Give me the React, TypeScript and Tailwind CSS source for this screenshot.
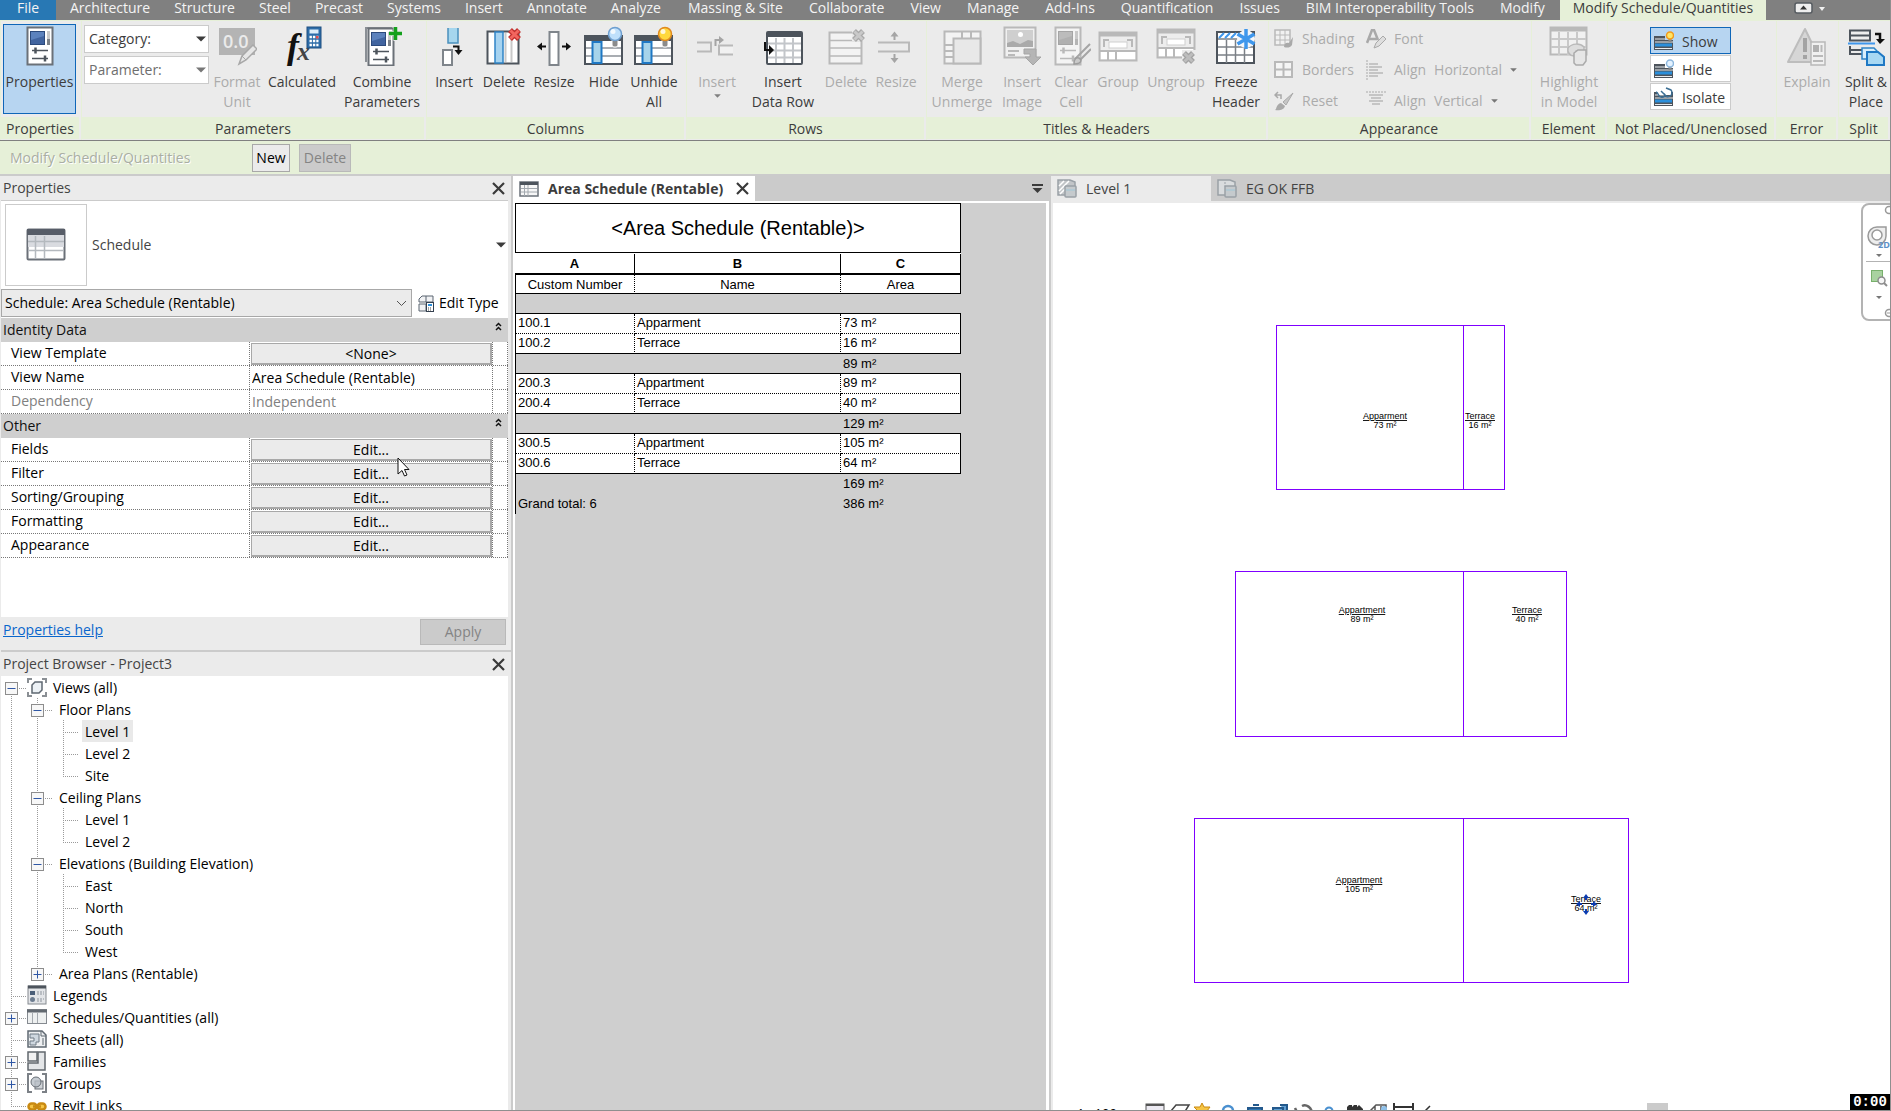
import { Fragment, ReactNode } from 'react';

const G = '#b9b9b9'; // disabled icon stroke
const D = '#4d545c'; // enabled icon stroke

/* ---------- icons ---------- */

function Icon({ children, size = 40, className = '' }: { children: ReactNode; size?: number; className?: string }) {
  return (
    <svg width={size} height={size} viewBox={`0 0 ${size} ${size}`} fill="none" className={`shrink-0 ${className}`} aria-hidden="true">
      {children}
    </svg>
  );
}

function Caret({ className = '' }: { className?: string }) {
  return (
    <svg width="10" height="6" viewBox="0 0 10 6" className={className} aria-hidden="true">
      <path d="M0 0.5h10L5 5.5z" fill="currentColor" />
    </svg>
  );
}

function CrossShape({ x, y, color, edge }: { x: number; y: number; color: string; edge: string }) {
  return (
    <g transform={`translate(${x} ${y})`}>
      <path d="M2 2l9 9M11 2l-9 9" stroke={edge} strokeWidth="5.5" />
      <path d="M2.5 2.5l8 8M10.5 2.5l-8 8" stroke={color} strokeWidth="3" />
    </g>
  );
}

function Sheet({ gray = false }: { gray?: boolean }) {
  const line = gray ? G : D;
  return (
    <g>
      <rect x="7.5" y="1.5" width="25" height="37" fill={gray ? '#f4f4f4' : '#fff'} stroke={gray ? G : '#6b7178'} strokeWidth="2" />
      <rect x="10.5" y="5.5" width="14" height="13" fill={gray ? '#b0b0b0' : '#41649f'} stroke={gray ? '#a5a5a5' : '#2c4a7c'} />
      <path d="M11 6h13v4l-13 4z" fill={gray ? '#bcbcbc' : '#5c82bd'} />
      <rect x="27" y="5" width="3" height="8" fill="#c9c9c9" />
      <rect x="27" y="13" width="3" height="6" fill={gray ? '#b5b5b5' : '#7d8288'} />
      <path d="M12 24.5h16M12 32.5h16" stroke={line} strokeWidth="1.5" />
      <path d="M15.5 21.5v6M25 29.5v6" stroke={line} strokeWidth="2.5" />
    </g>
  );
}

function PropertiesIcon() {
  return <Icon><Sheet /></Icon>;
}

function FormatUnitIcon() {
  return (
    <Icon>
      <rect x="2" y="2" width="36" height="27" fill="#b4b4b4" />
      <text x="6" y="22" fontSize="18" fontWeight="600" fill="#ebebeb" fontFamily="Open Sans, sans-serif">0.0</text>
      <path d="M22 38l3-8 11-11 4 4-11 11z" fill="#e6e6e6" stroke="#a8a8a8" strokeWidth="1.5" />
      <path d="M25 30l4 4" stroke="#a8a8a8" />
    </Icon>
  );
}

function CalculatedIcon() {
  return (
    <Icon>
      <text x="5" y="32" fontSize="36" fontStyle="italic" fontWeight="700" fill="#111" fontFamily="Liberation Serif, serif">f</text>
      <text x="15" y="34" fontSize="26" fontStyle="italic" fontWeight="700" fill="#444" fontFamily="Liberation Serif, serif">x</text>
      <rect x="25" y="1" width="14" height="21" fill="#2d6ca8" stroke="#1f4f80" />
      <rect x="27.5" y="3.5" width="9" height="4" fill="#dcecf8" />
      <path d="M27.5 11h9M27.5 15h9M27.5 19h9" stroke="#fff" strokeWidth="2.5" strokeDasharray="2.4 1" />
      <rect x="34" y="10" width="2.5" height="2.5" fill="#e34b4b" />
    </Icon>
  );
}

function CombineIcon() {
  return (
    <Icon>
      <path d="M4 36V2h26" stroke="#8a8f95" strokeWidth="2" />
      <g transform="translate(-1 1)"><Sheet /></g>
      <path d="M34 0v15M27 7.5h14" stroke="#ebebeb" strokeWidth="5" />
      <path d="M33.500 1v13M27 7.500h13" stroke="#13a01c" strokeWidth="3.5" />
    </Icon>
  );
}

function ColumnInsertIcon() {
  return (
    <Icon>
      <path d="M14 2v15h10V2" fill="#a6d6ee" stroke="#4a90bd" strokeWidth="1.5" />
      <rect x="9" y="24" width="9" height="15" fill="#fff" stroke="#7f858b" strokeWidth="2" />
      <path d="M19 20.5h5.500v5" stroke="#111" strokeWidth="2" />
      <path d="M20.5 24h8l-4 5z" fill="#111" />
    </Icon>
  );
}

function ColumnDeleteIcon() {
  return (
    <Icon>
      <rect x="3.5" y="5.5" width="31" height="32" fill="#fff" stroke={D} strokeWidth="2" />
      <path d="M21.500 7v29M27.500 7v29" stroke="#c9c9c9" strokeWidth="2" />
      <rect x="11" y="6" width="8" height="31" fill="#a6d3f0" stroke="#2f84c6" strokeWidth="1.5" />
      <CrossShape x={24} y={2} color="#f2665f" edge="#c22f2c" />
    </Icon>
  );
}

function ColumnResizeIcon() {
  return (
    <Icon>
      <rect x="15.5" y="6" width="9" height="33" fill="#fff" stroke="#7f858b" strokeWidth="2" />
      <path d="M5 20.5h7M28 20.5h7" stroke="#111" strokeWidth="2" />
      <path d="M3 20.5l5-4v8zM37 20.5l-5-4v8z" fill="#111" />
    </Icon>
  );
}

function BulbIcon({ lit = false }: { lit?: boolean }) {
  return (
    <Icon>
      <rect x="1" y="10" width="37" height="28" fill="#fff" stroke={D} strokeWidth="2" />
      <rect x="1" y="10" width="37" height="5" fill={D} />
      <path d="M2 22h35M2 30h35" stroke="#a9adb2" strokeWidth="2" />
      <rect x="8.5" y="16" width="9" height="21" fill="#a6d3ea" stroke="#1f78c4" strokeWidth="2" />
      <rect x="28" y="13" width="6" height="8" rx="2" fill="#8b8b8b" stroke="#fff" />
      <circle cx="31" cy="8" r="6.5" fill={lit ? '#ffd83d' : '#bfe0fb'} stroke={lit ? '#e08a1d' : '#6e9fd0'} strokeWidth="1.5" />
      <circle cx="29" cy="5.5" r="2.5" fill="#fff" opacity="0.8" />
    </Icon>
  );
}

function RowInsertIcon() {
  return (
    <Icon>
      <path d="M0 16.5h14v9H0" stroke={G} strokeWidth="2" />
      <path d="M36 19.5H22v9h14" fill="#f1f1f1" stroke={G} strokeWidth="2" />
      <path d="M18.5 20v-6h5" stroke="#a5a5a5" strokeWidth="2" />
      <path d="M22 10l5 4-5 4z" fill="#a5a5a5" />
    </Icon>
  );
}

function DataRowIcon() {
  return (
    <Icon>
      <rect x="4" y="6" width="35" height="32" rx="1" fill="#fff" stroke={D} strokeWidth="2" />
      <rect x="4" y="6" width="35" height="5" fill={D} />
      <path d="M5 17.5h33M5 24.5h33M5 31.5h33M13 12v25M21.5 12v25M30 12v25" stroke="#c3c6ca" strokeWidth="2" />
      <path d="M2 16v8h5" stroke="#111" strokeWidth="2" />
      <path d="M6 19l5 5-5 5z" fill="#111" />
    </Icon>
  );
}

function RowDeleteIcon() {
  return (
    <Icon>
      <rect x="3.5" y="6.5" width="32" height="31" fill="#f3f3f3" stroke={G} strokeWidth="2" />
      <path d="M4 14.5h31M4 22h31M4 30h31" stroke={G} strokeWidth="1.5" />
      <path d="M26 4h12v11H26z" fill="#ebebeb" />
      <CrossShape x={26} y={3} color="#c9c9c9" edge="#a9a9a9" />
    </Icon>
  );
}

function RowResizeIcon() {
  return (
    <Icon>
      <path d="M2 16.5h31v9H2" stroke={G} strokeWidth="2" />
      <path d="M18.5 8v6M18.5 28v6" stroke="#a5a5a5" strokeWidth="2" />
      <path d="M18.5 5.5l4 5h-8zM18.5 37l4-5h-8z" fill="#a5a5a5" />
    </Icon>
  );
}

function MergeIcon() {
  return (
    <Icon>
      <rect x="2.5" y="5.5" width="36" height="32" fill="#f3f3f3" stroke={G} strokeWidth="2" />
      <rect x="11.5" y="12.5" width="27" height="25" fill="#e8e8e8" stroke={G} strokeWidth="2" />
      <path d="M3 19h8M3 25h8M3 31h8M20 6v6M29 6v6" stroke={G} strokeWidth="2" />
    </Icon>
  );
}

function InsertImageIcon() {
  return (
    <Icon>
      <rect x="2.5" y="1.5" width="31" height="30" fill="#f0f0f0" stroke={G} strokeWidth="2" />
      <rect x="5" y="4" width="26" height="17" fill="#cfcfcf" />
      <circle cx="18.5" cy="8.5" r="2.5" fill="#fff" />
      <path d="M5 17l6-2 7 3 8-4 5 1v6H5z" fill="#aaa" />
      <path d="M6 25h11M6 29h7" stroke={G} strokeWidth="2" />
      <path d="M22 23h12v8h5l-8 8-8-8h5v-3h-6z" fill="#b5b5b5" stroke="#a5a5a5" />
    </Icon>
  );
}

function ClearCellIcon() {
  return (
    <Icon>
      <g transform="translate(-3 0)"><Sheet gray /></g>
      <path d="M24 33l15-15M27 36l13-13" stroke="#a5a5a5" strokeWidth="2" />
      <path d="M23 38c0-5 2-7 5-6l2 2c0 3-3 4-7 4z" fill="#c9c9c9" stroke="#9d9d9d" strokeWidth="1.5" />
    </Icon>
  );
}

function GroupIcon({ ungroup = false }: { ungroup?: boolean }) {
  return (
    <Icon>
      <g transform={ungroup ? 'translate(0 -3)' : undefined}>
        <rect x="1.5" y="6.5" width="37" height="28" fill="#ededed" stroke={G} strokeWidth="2" />
        <rect x="1.5" y="6.5" width="37" height="4" fill={G} />
        <path d="M6 21v-7h5M34 21v-7h-5" stroke={G} strokeWidth="2" />
        <rect x="11" y="16" width="18" height="6" fill="#fff" stroke="#cfcfcf" />
        <rect x="3" y="25" width="34" height="8" fill="#fff" />
        <path d="M2 25h36M10 25v9M18 25v9" stroke={G} strokeWidth="2" />
      </g>
      {ungroup && <path d="M26 24h14v14H26z" fill="#ebebeb" />}
      {ungroup && <CrossShape x={26} y={25} color="#bdbdbd" edge="#a2a2a2" />}
    </Icon>
  );
}

function FreezeIcon() {
  return (
    <Icon>
      <rect x="1" y="6" width="37" height="31" fill="#fff" stroke={D} strokeWidth="2" />
      <path d="M2 13h35M2 21h35M2 29h35M10.5 14v23M19.5 14v23M28.5 14v23" stroke="#7b8086" strokeWidth="1.5" />
      <path d="M3 12l5-5M9 12l5-5M15 12l5-5" stroke="#3f97ec" strokeWidth="2" />
      <circle cx="30" cy="13" r="9" fill="#f3f6fa" />
      <path d="M30 3v20M21.5 8l17 10M38.5 8l-17 10" stroke="#3f97ec" strokeWidth="3.5" />
    </Icon>
  );
}

function HighlightIcon() {
  return (
    <Icon>
      <rect x="1.5" y="1.5" width="36" height="27" fill="#f1f1f1" stroke={G} strokeWidth="2" />
      <rect x="1.5" y="1.5" width="36" height="4" fill={G} />
      <path d="M2 13h35M2 21h35M10 6v23M19 6v23M28 6v23" stroke="#c9c9c9" strokeWidth="2" />
      <path d="M19 22c4-5 12-5 16-1v4h-8l-2 5c-4 0-7-4-6-8z" fill="#ddd" stroke={G} strokeWidth="1.5" />
      <path d="M25 27l4-3h8v11l-3 4h-7l-2-2z" fill="#e6e6e6" stroke="#aaa" strokeWidth="1.5" />
    </Icon>
  );
}

function ExplainIcon() {
  return (
    <Icon>
      <path d="M18 3l16 33H1z" fill="#d6d6d6" stroke="#bdbdbd" strokeWidth="2" strokeLinejoin="round" />
      <path d="M18 12v14M18 29v4" stroke="#a3a3a3" strokeWidth="4" />
      <rect x="24" y="16" width="14" height="23" fill="#f0f0f0" stroke={G} strokeWidth="1.5" />
      <rect x="26" y="19" width="6" height="7" fill="#b0b0b0" />
      <path d="M34.5 19v7M26 30h10M26 35h10" stroke={G} strokeWidth="2" />
    </Icon>
  );
}

function SplitIcon() {
  return (
    <Icon>
      <path d="M4 4.5h20v10H4zM4 9.5h20" fill="#eee" stroke={D} strokeWidth="2" />
      <path d="M4 20v8h12M4 24h12" stroke={D} strokeWidth="2" />
      <path d="M2 17.5h27" stroke="#3f97ec" strokeWidth="2" />
      <path d="M29 8h5v6" stroke="#111" strokeWidth="2.5" />
      <path d="M30 13h9l-5 5z" fill="#111" />
      <path d="M16 22h12l3 3v8H16z" fill="#d8eefb" stroke="#2f84c6" strokeWidth="1.5" />
      <path d="M21 26h11l6 5v8H21z" fill="#a8d8f3" stroke="#1f78c4" strokeWidth="2" />
    </Icon>
  );
}

function ShadingIcon() {
  return (
    <Icon size={20}>
      <rect x="1" y="1" width="15" height="15" fill="#f1f1f1" stroke={G} strokeWidth="1.5" />
      <path d="M1 6h15M1 11h15M6 1v15M11 1v15" stroke={G} />
      <path d="M10 18c0-4 3-5 5-4l4-6-1 8c-2 3-5 3-8 2z" fill="#a9a9a9" />
    </Icon>
  );
}

function BordersIcon() {
  return (
    <Icon size={20}>
      <rect x="1" y="2" width="17" height="15" fill="#f5f5f5" stroke={G} strokeWidth="2" />
      <path d="M1 9.5h17M9.5 2v15" stroke={G} strokeWidth="2" />
    </Icon>
  );
}

function ResetIcon() {
  return (
    <Icon size={20}>
      <path d="M1 4h6v4M4 1L1 4l3 3" stroke="#a9a9a9" strokeWidth="1.5" />
      <path d="M19 2L9 11l3 3z" fill="#c6c6c6" stroke="#a9a9a9" />
      <path d="M1 19c2-1 1-6 6-7l4 3c-1 4-6 5-10 4z" fill="#a9a9a9" />
    </Icon>
  );
}

function FontIcon() {
  return (
    <Icon size={20}>
      <path d="M1 14L6 1h2l4 10M3 10h8" stroke="#a9a9a9" strokeWidth="2.5" />
      <path d="M8 19l2-5 7-7 3 3-7 7z" fill="#dedede" stroke="#a9a9a9" />
    </Icon>
  );
}

function AlignHIcon() {
  return (
    <Icon size={20}>
      <path d="M1 0v20" stroke="#a9a9a9" strokeDasharray="2 1" />
      <path d="M3 4h9M3 7h13M3 10h9M3 13h14M3 16h9" stroke={G} strokeWidth="1.5" />
    </Icon>
  );
}

function AlignVIcon() {
  return (
    <Icon size={20}>
      <path d="M0 1h20" stroke="#a9a9a9" strokeDasharray="2 1" />
      <path d="M3 4h14M5 7h10M3 10h14M6 13h8" stroke={G} strokeWidth="1.5" />
    </Icon>
  );
}

function PlacedIcon({ kind }: { kind: 'show' | 'hide' | 'isolate' }) {
  return (
    <Icon size={20}>
      <path d="M0 5h19v14H0z" fill={D} />
      <path d="M1 8h10M1 11h18M1 17.5h17" stroke="#e8ebee" />
      <rect x="1" y="12.5" width="17" height="3" fill="#2b8fdb" />
      {kind === 'isolate' ? (
        <g>
          <path d="M3 0h14v8H3z" fill="#fff" />
          <path d="M2 5c3 1 2 5 5 5 3 1 4-2 4-2s2 3 5 1c3-1 2-5 1-6l-5-2M7 4l4 4" stroke="#3c6f94" strokeWidth="1.5" />
        </g>
      ) : (
        <g>
          <path d="M11 0h9v9h-9z" fill={kind === 'show' ? '#b7d5f1' : '#fff'} />
          <rect x="14.5" y="7" width="3" height="4" fill="#888" />
          <circle cx="16" cy="4.5" r="3.5" fill={kind === 'show' ? '#ffe566' : '#e4f2ff'} stroke={kind === 'show' ? '#f39a1b' : '#8db7dd'} strokeWidth="1.5" />
        </g>
      )}
    </Icon>
  );
}

function ScheduleIcon({ className = '' }: { className?: string }) {
  return (
    <svg width="20" height="16" viewBox="0 0 20 16" fill="none" className={`shrink-0 ${className}`} aria-hidden="true">
      <rect x="1" y="1" width="18" height="14" fill="#f7f7f7" stroke="#6b727a" strokeWidth="1.5" />
      <rect x="1" y="1" width="18" height="3" fill={D} />
      <path d="M2 7.5h16M2 11h16M5.5 4v11M9 4v11" stroke="#a3a9af" />
    </svg>
  );
}

function ViewTabIcon({ hatched = false }: { hatched?: boolean }) {
  return (
    <Icon size={20}>
      <path d="M1 1h12l5 2v13H1z" fill={hatched ? '#c2c5c8' : '#d9dcde'} stroke="#9aa1a7" strokeWidth="1.5" />
      {hatched && <path d="M2 7l5-5M2 12L12 2M3 15l5-5" stroke="#fff" strokeWidth="1.5" />}
      {!hatched && <path d="M8 3v5" stroke="#9aa1a7" strokeDasharray="2 1" />}
      <rect x="8" y="7" width="11" height="11" rx="1" fill="#c5cacd" stroke="#9aa1a7" strokeWidth="1.5" />
      <path d="M9 11h9" stroke="#9fc7d8" />
    </Icon>
  );
}

function CloseIcon() {
  return (
    <svg width="13" height="13" viewBox="0 0 13 13" aria-hidden="true">
      <path d="M1 1l11 11M12 1L1 12" stroke="#3a3a3a" strokeWidth="2.2" fill="none" />
    </svg>
  );
}

/* ---------- ribbon ---------- */

const menuTabs = ['Architecture', 'Structure', 'Steel', 'Precast', 'Systems', 'Insert', 'Annotate', 'Analyze'];

const extraTabs = [
  'Massing & Site', 'Collaborate', 'View', 'Manage', 'Add-Ins', 'Quantification', 'Issues', 'BIM Interoperability Tools', 'Modify',
];

function MenuBar() {
  return (
    <nav className="flex h-5 shrink-0 overflow-hidden whitespace-nowrap bg-[#808080] text-[#f4f4f4]">
      <button className="h-5 w-14 shrink-0 bg-[#2878b4] pb-1 leading-4">File</button>
      <div className="flex pl-0.5">
        {menuTabs.map((tab) => (
          <button key={tab} className="h-5 px-3 pb-1 leading-4">{tab}</button>
        ))}
      </div>
      <div className="flex px-0.5">
        {extraTabs.map((tab) => (
          <button key={tab} className="h-5 px-[13px] pb-1 leading-4">{tab}</button>
        ))}
      </div>
      <button className="h-5 w-[206px] shrink-0 bg-[#e6f0d8] pb-1 leading-4 text-[#3c3c3c]">Modify Schedule/Quantities</button>
      <button className="ml-7 flex items-start pt-0.5" aria-label="Minimize ribbon">
        <svg width="32" height="12" viewBox="0 0 32 12">
          <rect x="1" y="1" width="17" height="10" rx="2" fill="#eee" stroke="#565b60" strokeWidth="1.5" />
          <path d="M9.5 3.5l3.500 4H6z" fill="#333" />
          <path d="M25 5h6l-3 4z" fill="#f0f0f0" />
        </svg>
      </button>
    </nav>
  );
}

interface ToolProps {
  icon: ReactNode;
  label: string;
  width: string;
  off?: boolean;
  menu?: boolean;
}

function Tool({ icon, label, width, off = false, menu = false }: ToolProps) {
  return (
    <button disabled={off} className={`flex shrink-0 flex-col items-center whitespace-nowrap pt-[5px] ${width} ${off ? 'text-[#ababab]' : 'text-[#3c3c3c]'}`}>
      {icon}
      <span className="mt-1.5 block whitespace-pre-line leading-5">{label}</span>
      {menu && <Caret className="mt-0.5 h-1 w-[7px] text-[#808080]" />}
    </button>
  );
}

function Panel({ title, width, children }: { title: string; width: string; children: ReactNode }) {
  return (
    <section className={`flex flex-col border-l border-[#e6f0d8] ${width}`}>
      <div className="flex h-[96px] overflow-hidden pl-0.5">{children}</div>
      <h2 className="mr-[2px] h-[22px] whitespace-nowrap bg-[#e6f0d8] text-center leading-6 text-[#3c3c3c]">{title}</h2>
    </section>
  );
}

function RibbonSelect({ label, off = false }: { label: string; off?: boolean }) {
  return (
    <div className="relative h-7">
      <select aria-label={label} disabled={off} className={`h-full w-full appearance-none border border-[#cbcbcb] bg-white pl-1 opacity-100 ${off ? 'text-[#6e6e6e]' : 'text-[#3c3c3c]'}`}>
        <option>{label}</option>
      </select>
      <Caret className={`pointer-events-none absolute right-[3px] top-[11px] ${off ? 'text-[#777]' : 'text-[#3c3c3c]'}`} />
    </div>
  );
}

function SmallTool({ icon, children }: { icon: ReactNode; children: ReactNode }) {
  return (
    <button disabled className="flex h-[31px] items-center gap-2 whitespace-nowrap text-[#ababab]">
      {icon}
      {children}
    </button>
  );
}

function PlacedButton({ kind, label, active = false }: { kind: 'show' | 'hide' | 'isolate'; label: string; active?: boolean }) {
  return (
    <button className={`flex h-[27px] items-center gap-2 border pl-[3px] ${active ? 'border-[#0f66b8] bg-[#b7d5f1]' : 'border-[#cbcbcb] bg-white'}`}>
      <PlacedIcon kind={kind} />
      <span className="pt-0.5">{label}</span>
    </button>
  );
}

function Ribbon() {
  return (
    <div className="flex h-[121px] shrink-0 overflow-hidden border-b border-t border-b-[#808080] border-t-[#e6f0d8] bg-[#ebebeb]">
      <Panel title="Properties" width="w-[81px] shrink-0">
        <button className="mt-[3px] flex h-[90px] w-[73px] flex-col items-center border border-[#0f66b8] bg-[#b7d5f1] pt-px text-[#3c3c3c]">
          <PropertiesIcon />
          <span className="mt-1.5 leading-5">Properties</span>
        </button>
      </Panel>
      <Panel title="Parameters" width="w-[345px] shrink-0">
        <div className="mr-[3px] flex w-[125px] shrink-0 flex-col gap-[3px] pt-1">
          <RibbonSelect label="Category:" />
          <RibbonSelect label="Parameter:" off />
        </div>
        <Tool icon={<FormatUnitIcon />} label={'Format\nUnit'} width="w-[50px]" off />
        <Tool icon={<CalculatedIcon />} label="Calculated" width="w-[80px]" />
        <Tool icon={<CombineIcon />} label={'Combine\nParameters'} width="w-[80px]" />
      </Panel>
      <Panel title="Columns" width="w-[260px] shrink-0">
        <Tool icon={<ColumnInsertIcon />} label="Insert" width="w-[50px]" />
        <Tool icon={<ColumnDeleteIcon />} label="Delete" width="w-[50px]" />
        <Tool icon={<ColumnResizeIcon />} label="Resize" width="w-[50px]" />
        <Tool icon={<BulbIcon />} label="Hide" width="w-[50px]" />
        <Tool icon={<BulbIcon lit />} label={'Unhide\nAll'} width="w-[50px]" />
      </Panel>
      <Panel title="Rows" width="w-[240px] shrink-0">
        <Tool icon={<RowInsertIcon />} label="Insert" width="w-[56px]" off menu />
        <Tool icon={<DataRowIcon />} label={'Insert\nData Row'} width="w-[76px]" />
        <Tool icon={<RowDeleteIcon />} label="Delete" width="w-[50px]" off />
        <Tool icon={<RowResizeIcon />} label="Resize" width="w-[50px]" off />
      </Panel>
      <Panel title="Titles & Headers" width="w-[342px] shrink-0">
        <Tool icon={<MergeIcon />} label={'Merge\nUnmerge'} width="w-[66px]" off />
        <Tool icon={<InsertImageIcon />} label={'Insert\nImage'} width="w-[54px]" off />
        <Tool icon={<ClearCellIcon />} label={'Clear\nCell'} width="w-[44px]" off />
        <Tool icon={<GroupIcon />} label="Group" width="w-[50px]" off />
        <Tool icon={<GroupIcon ungroup />} label="Ungroup" width="w-[66px]" off />
        <Tool icon={<FreezeIcon />} label={'Freeze\nHeader'} width="w-[54px]" />
      </Panel>
      <Panel title="Appearance" width="w-[263px] shrink-0">
        <div className="flex w-[95px] shrink-0 flex-col pl-[3px] pt-0.5">
          <SmallTool icon={<ShadingIcon />}>Shading</SmallTool>
          <SmallTool icon={<BordersIcon />}>Borders</SmallTool>
          <SmallTool icon={<ResetIcon />}>Reset</SmallTool>
        </div>
        <div className="flex flex-col pt-0.5">
          <SmallTool icon={<FontIcon />}>Font</SmallTool>
          <SmallTool icon={<AlignHIcon />}>
            <span>Align</span><span>Horizontal</span><Caret className="h-1 w-[7px] text-[#777]" />
          </SmallTool>
          <SmallTool icon={<AlignVIcon />}>
            <span>Align</span><span>Vertical</span><Caret className="h-1 w-[7px] text-[#777]" />
          </SmallTool>
        </div>
      </Panel>
      <Panel title="Element" width="w-[76px] shrink-0">
        <Tool icon={<HighlightIcon />} label={'Highlight\nin Model'} width="w-[70px]" off />
      </Panel>
      <Panel title="Not Placed/Unenclosed" width="w-[169px] shrink-0">
        <div className="ml-10 flex w-[81px] flex-col gap-px pt-1.5 text-[#3c3c3c]">
          <PlacedButton kind="show" label="Show" active />
          <PlacedButton kind="hide" label="Hide" />
          <PlacedButton kind="isolate" label="Isolate" />
        </div>
      </Panel>
      <Panel title="Error" width="w-[62px] shrink-0">
        <Tool icon={<ExplainIcon />} label="Explain" width="w-[56px]" off />
      </Panel>
      <Panel title="Split" width="min-w-[52px] flex-1">
        <Tool icon={<SplitIcon />} label={'Split &\nPlace'} width="w-[50px]" />
      </Panel>
    </div>
  );
}

function OptionsBar() {
  return (
    <div className="flex h-[35px] shrink-0 items-center border-b-2 border-[#cbcbcb] bg-[#e6f0d8]">
      <span className="w-[252px] whitespace-nowrap pl-[10px] text-[#a9aea3] [text-shadow:1px_1px_0_#fff]">Modify Schedule/Quantities</span>
      <button className="h-7 w-[38px] border border-[#a8a8a8] bg-[#ebebeb] text-black">New</button>
      <button disabled className="ml-[9px] h-7 w-[52px] border border-[#b9b9b9] bg-[#cbcbcb] text-[#848484]">Delete</button>
    </div>
  );
}

/* ---------- properties palette ---------- */

interface Param {
  name: string;
  value: string;
  kind: 'button' | 'text' | 'readonly';
}

const groups: { title: string; params: Param[] }[] = [
  {
    title: 'Identity Data',
    params: [
      { name: 'View Template', value: '<None>', kind: 'button' },
      { name: 'View Name', value: 'Area Schedule (Rentable)', kind: 'text' },
      { name: 'Dependency', value: 'Independent', kind: 'readonly' },
    ],
  },
  {
    title: 'Other',
    params: ['Fields', 'Filter', 'Sorting/Grouping', 'Formatting', 'Appearance'].map((name) => ({ name, value: 'Edit...', kind: 'button' as const })),
  },
];

function PaletteTitle({ children }: { children: ReactNode }) {
  return (
    <header className="flex h-6 shrink-0 items-center justify-between pl-[2px] pr-1.5 text-[#444]">
      <h2 className="leading-6">{children}</h2>
      <button aria-label="Close"><CloseIcon /></button>
    </header>
  );
}

function ParamRow({ name, value, kind }: Param) {
  const id = `param-${name}`;
  return (
    <div className="flex h-6 border-b border-dotted border-[#777]">
      <label htmlFor={id} className={`w-[249px] shrink-0 border-r border-dotted border-[#777] pl-[10px] leading-[22px] ${kind === 'readonly' ? 'text-[#808080]' : 'text-black'}`}>{name}</label>
      <div className="flex min-w-0 flex-1 border-r border-dotted border-[#777] pl-px">
        {kind === 'button' ? (
          <button id={id} className="mt-px h-[22px] w-full border border-b-2 border-r-2 border-[#a8a8a8] bg-[#ebebeb] leading-[18px] text-black">{value}</button>
        ) : (
          <input id={id} defaultValue={value} disabled={kind === 'readonly'} className={`h-[22px] w-full pl-px ${kind === 'readonly' ? 'text-[#808080]' : 'text-black'}`} />
        )}
      </div>
      <div className="w-[15px] border-r border-dotted border-[#777]" />
    </div>
  );
}

function PropertiesPalette() {
  return (
    <section className="relative flex h-[474px] shrink-0 flex-col">
      <PaletteTitle>Properties</PaletteTitle>
      <div className="mr-[3px] flex h-[88px] shrink-0 items-center border-t border-[#cbcbcb] bg-white pl-1">
        <div className="flex size-[82px] items-center justify-center border border-[#cbcbcb]">
          <svg width="40" height="33" viewBox="0 0 40 33" fill="none" aria-hidden="true">
            <rect x="1.5" y="1.5" width="37" height="30" rx="1" fill="#fff" stroke="#6b7078" strokeWidth="2" />
            <path d="M2 7h36v12H2z" fill="#d9dbe0" />
            <rect x="1" y="1" width="38" height="6" fill="#575d68" />
            <path d="M2 13.5h36M2 22.5h36M9.5 8v23M18.5 8v23" stroke="#b4b9be" strokeWidth="1.5" />
          </svg>
        </div>
        <span className="ml-[5px] flex-1 text-[#444]">Schedule</span>
        <button aria-label="Change type" className="mr-[2px]"><Caret className="text-[#3c3c3c]" /></button>
      </div>
      <div className="mr-[3px] flex h-[30px] shrink-0 items-center bg-white">
        <div className="relative h-7 w-[411px]">
          <select aria-label="Instance" className="h-full w-full appearance-none border border-[#a8a8a8] bg-[#ebebeb] pl-[3px] text-black">
            <option>Schedule: Area Schedule (Rentable)</option>
          </select>
          <svg width="11" height="7" viewBox="0 0 11 7" className="pointer-events-none absolute right-[5px] top-[11px]">
            <path d="M1 1l4.500 4.500L10 1" stroke="#555" fill="none" />
          </svg>
        </div>
        <button className="ml-[6px] flex items-center gap-1 text-black">
          <svg width="17" height="17" viewBox="0 0 17 17" fill="none">
            <path d="M1 4l3-3h4v6H1zM8 1h7v6H8M1 9h7v7H1z" fill="#f1f2f4" stroke="#5b6470" />
            <rect x="8.5" y="7.5" width="7" height="9" fill="#fff" stroke="#333f4e" />
            <path d="M10 10h4" stroke="#2b8fdb" strokeWidth="2" />
            <path d="M10 13h4M10 15h4" stroke="#444" strokeDasharray="1 1" />
          </svg>
          Edit Type
        </button>
      </div>
      <div className="mr-[3px] min-h-0 flex-1 bg-white">
        {groups.map((group) => (
          <Fragment key={group.title}>
            <h3 className="flex h-6 justify-between bg-[#cfcfcf] pl-[2px] pr-[6px] leading-6 text-[#111]">
              {group.title}
              <svg width="7" height="9" viewBox="0 0 7 9" className="mt-1">
                <path d="M1 4l2.500-2.500L6 4M1 8l2.500-2.500L6 8" stroke="#111" strokeWidth="1.5" fill="none" />
              </svg>
            </h3>
            {group.params.map((p) => <ParamRow key={p.name} {...p} />)}
          </Fragment>
        ))}
      </div>
      <footer className="flex h-[33px] shrink-0 items-start justify-between pl-[2px] pr-[5px] pt-0.5">
        <a href="#help" className="leading-[22px] text-[#0a66cc] underline">Properties help</a>
        <button disabled className="h-[26px] w-[86px] border border-[#b9b9b9] bg-[#cbcbcb] text-[#848484]">Apply</button>
      </footer>
      {/* mouse pointer */}
      <svg width="13" height="20" viewBox="0 0 13 20" className="pointer-events-none absolute left-[396px] top-[281px]">
        <path d="M1 1v16l4-3.500 2.500 5.500 2.500-1-2.500-5.500H12z" fill="#fff" stroke="#111" />
      </svg>
    </section>
  );
}

/* ---------- project browser ---------- */

type Guide = 'line' | 'tee' | 'end' | 'open' | 'openTop' | 'closed' | 'closedEnd';

interface Node {
  label: string;
  guides: Guide[];
  icon?: 'views' | 'legend' | 'schedule' | 'sheet' | 'family' | 'group' | 'link';
  selected?: boolean;
}

const nodes: Node[] = [
  { label: 'Views (all)', guides: ['openTop'], icon: 'views' },
  { label: 'Floor Plans', guides: ['line', 'open'] },
  { label: 'Level 1', guides: ['line', 'line', 'tee'], selected: true },
  { label: 'Level 2', guides: ['line', 'line', 'tee'] },
  { label: 'Site', guides: ['line', 'line', 'end'] },
  { label: 'Ceiling Plans', guides: ['line', 'open'] },
  { label: 'Level 1', guides: ['line', 'line', 'tee'] },
  { label: 'Level 2', guides: ['line', 'line', 'end'] },
  { label: 'Elevations (Building Elevation)', guides: ['line', 'open'] },
  { label: 'East', guides: ['line', 'line', 'tee'] },
  { label: 'North', guides: ['line', 'line', 'tee'] },
  { label: 'South', guides: ['line', 'line', 'tee'] },
  { label: 'West', guides: ['line', 'line', 'end'] },
  { label: 'Area Plans (Rentable)', guides: ['line', 'closedEnd'] },
  { label: 'Legends', guides: ['tee'], icon: 'legend' },
  { label: 'Schedules/Quantities (all)', guides: ['closed'], icon: 'schedule' },
  { label: 'Sheets (all)', guides: ['tee'], icon: 'sheet' },
  { label: 'Families', guides: ['closed'], icon: 'family' },
  { label: 'Groups', guides: ['closed'], icon: 'group' },
  { label: 'Revit Links', guides: ['end'], icon: 'link' },
];

function GuideCell({ type }: { type: Guide }) {
  const up = type !== 'openTop';
  const down = type !== 'end' && type !== 'closedEnd';
  const box = type.startsWith('open') || type.startsWith('closed');
  const drawing = (
    <svg width="26" height="22" viewBox="0 0 26 22" fill="none" aria-hidden="true">
      <g stroke="#9a9a9a" strokeDasharray="1 1">
        {up && <path d="M10.5 0v12" />}
        {down && <path d="M10.5 12v10" />}
        {type !== 'line' && <path d="M10 12.5h16" />}
      </g>
      {box && <rect x="4.5" y="6.5" width="12" height="12" fill="#f7f7f7" stroke="#8d8d8d" />}
      {box && <path d="M6.5 12.5h8" stroke="#2f57a5" />}
      {type.startsWith('closed') && <path d="M10.5 8.5v8" stroke="#2f57a5" />}
    </svg>
  );
  return box ? <button aria-label="Toggle" className="shrink-0">{drawing}</button> : <span className="shrink-0">{drawing}</span>;
}

function NodeIcon({ icon }: { icon: NonNullable<Node['icon']> }) {
  return (
    <Icon size={20}>
      {icon === 'views' && (
        <g>
          <path d="M1 6V2h4M15 2h4v4M19 15v4h-4M5 19H1v-4" stroke="#8a8f94" strokeWidth="2" />
          <path d="M5 8l3-3h7v8l-3 3H5z" fill="#edf2f6" stroke="#5f6871" strokeWidth="1.5" />
        </g>
      )}
      {icon === 'legend' && (
        <g>
          <rect x="1" y="1" width="18" height="18" fill="#e3e5e8" stroke="#858a90" />
          <path d="M1 2h18" stroke="#4d545c" strokeWidth="3" />
          <rect x="3" y="6" width="5" height="4" fill="#4a5e78" />
          <circle cx="5.5" cy="14.5" r="2.5" fill="#6c7c90" />
          <path d="M10 7h7M10 9h7M10 14h7M10 16h5" stroke="#8d949c" strokeDasharray="2 1" />
        </g>
      )}
      {icon === 'schedule' && (
        <g>
          <rect x="0.5" y="2.5" width="19" height="14" fill="#eef0f0" stroke="#858a90" />
          <path d="M0 4h20" stroke="#626970" strokeWidth="3" />
          <path d="M5.5 6v10M10.5 6v10" stroke="#a5aaaf" />
        </g>
      )}
      {icon === 'sheet' && (
        <g>
          <path d="M1 2h14l4 4v12H1z" fill="#eef0f2" stroke="#5f6871" strokeWidth="1.5" />
          <path d="M3 5h9v8H9v3H3v-4h4V9H3z" fill="#cfd8e0" stroke="#6f7a85" />
          <path d="M14 2v5h5M16 9v7" stroke="#5f6871" />
        </g>
      )}
      {icon === 'family' && (
        <g>
          <path d="M1 1h9v9H1z" fill="#f1f1f1" stroke="#62686e" strokeWidth="1.5" />
          <path d="M1 12h10V1h7v18H1z" fill="#e4e6e8" stroke="#62686e" strokeWidth="1.5" />
        </g>
      )}
      {icon === 'group' && (
        <g>
          <path d="M5 1H1v18h4M15 1h4v18h-4" stroke="#7c8187" strokeWidth="2" />
          <rect x="8" y="8" width="8" height="8" fill="#cfd3d7" stroke="#666d75" />
          <circle cx="9" cy="9" r="5" fill="#b9c0c8" fillOpacity="0.8" stroke="#666d75" />
        </g>
      )}
      {icon === 'link' && (
        <g stroke="#c98a12" strokeWidth="2.5">
          <rect x="1.5" y="8.5" width="8" height="6" rx="3" fill="#f6c545" />
          <rect x="10.5" y="8.5" width="8" height="6" rx="3" fill="#f6c545" />
          <path d="M6 11.5h8" />
        </g>
      )}
    </Icon>
  );
}

function ProjectBrowser() {
  return (
    <section className="flex min-h-0 flex-1 flex-col border-t-2 border-[#cbcbcb]">
      <PaletteTitle>Project Browser - Project3</PaletteTitle>
      <ul className="mr-[3px] min-h-0 flex-1 overflow-hidden bg-white text-black">
        {nodes.map((node, i) => (
          <li key={i} className="flex h-[22px] items-center">
            {node.guides.map((g, j) => <GuideCell key={j} type={g} />)}
            {node.icon && <NodeIcon icon={node.icon} />}
            <span className={`ml-[3px] h-[22px] px-[3px] leading-6 ${node.selected ? 'bg-[#e9e9e9]' : ''}`}>{node.label}</span>
          </li>
        ))}
      </ul>
    </section>
  );
}

/* ---------- schedule view ---------- */

type Row = { number?: string; name?: string; area?: string; kind: 'data' | 'last' | 'footer' | 'total' };

const rows: Row[] = [
  { kind: 'footer' },
  { kind: 'data', number: '100.1', name: 'Apparment', area: '73 m²' },
  { kind: 'last', number: '100.2', name: 'Terrace', area: '16 m²' },
  { kind: 'footer', area: '89 m²' },
  { kind: 'data', number: '200.3', name: 'Appartment', area: '89 m²' },
  { kind: 'last', number: '200.4', name: 'Terrace', area: '40 m²' },
  { kind: 'footer', area: '129 m²' },
  { kind: 'data', number: '300.5', name: 'Appartment', area: '105 m²' },
  { kind: 'last', number: '300.6', name: 'Terrace', area: '64 m²' },
  { kind: 'total', area: '169 m²' },
  { kind: 'total', number: 'Grand total: 6', area: '386 m²' },
];

const rowStyle = {
  data: 'bg-white pb-0.5 border-b border-r border-dotted last:[border-right-style:solid]',
  last: 'bg-white pb-0.5 border-b border-r [border-style:dotted_dotted_solid] last:[border-right-style:solid]',
  footer: 'pb-0 border-b border-solid',
  total: 'pb-0.5',
};

function ScheduleTable() {
  return (
    <table className="w-[446px] table-fixed border-separate border-spacing-0 font-['Liberation_Sans',Arial,sans-serif] text-[13px] text-black">
      <caption className="border-b border-white">
        <div className="h-[50px] border border-black bg-white text-center text-[20px] leading-[48px]">&lt;Area Schedule (Rentable)&gt;</div>
      </caption>
      <colgroup>
        <col className="w-[120px]" />
        <col className="w-[206px]" />
        <col className="w-[120px]" />
      </colgroup>
      <thead>
        <tr className="bg-white">
          {['A', 'B', 'C'].map((c) => (
            <th key={c} scope="col" className="h-[21px] border-b-2 border-r border-black p-0 leading-[15px]">{c}</th>
          ))}
        </tr>
        <tr className="bg-white">
          {['Custom Number', 'Name', 'Area'].map((c) => (
            <th key={c} scope="col" className="h-[19px] border-b border-r border-black p-0 font-normal leading-[15px] [border-right-style:dotted] first:border-l last:[border-right-style:solid]">{c}</th>
          ))}
        </tr>
      </thead>
      <tbody>
        {rows.map((row, i) => (
          <tr key={i}>
            {[row.number, row.name, row.area].map((cell, j) => (
              <td key={j} className={`h-5 border-black px-[2px] pt-0 leading-[15px] first:border-l first:[border-left-style:solid] ${rowStyle[row.kind]}`}>
                {cell}
              </td>
            ))}
          </tr>
        ))}
      </tbody>
    </table>
  );
}

function ScheduleView() {
  return (
    <main className="flex w-[538px] shrink-0 flex-col border-r-2 border-[#cbcbcb] bg-[#cbcbcb]">
      <div className="flex h-[25px] shrink-0 items-center">
        <div className="flex h-full w-[242px] items-center bg-white pl-1.5 text-[#3c3c3c]">
          <ScheduleIcon />
          <span className="ml-[9px] flex-1 whitespace-nowrap font-bold">Area Schedule (Rentable)</span>
          <button aria-label="Close view" className="mr-[6px]"><CloseIcon /></button>
        </div>
        <button aria-label="View list" className="ml-auto mr-[6px]">
          <svg width="11" height="9" viewBox="0 0 11 9">
            <path d="M0 1h11" stroke="#3c3c3c" strokeWidth="2" />
            <path d="M0.5 4h10l-5 5z" fill="#3c3c3c" />
          </svg>
        </button>
      </div>
      <div className="min-h-0 flex-1 overflow-hidden border-l-2 border-r-[3px] border-t-2 border-white bg-[#cfcfcf]">
        <ScheduleTable />
      </div>
    </main>
  );
}

/* ---------- area plan view ---------- */

const plans = [
  { x: 223, y: 122, w: 228, h: 164 },
  { x: 182, y: 368, w: 331, h: 165 },
  { x: 141, y: 615, w: 434, h: 164 },
];

const tags = [
  { x: 332, y: 216, name: 'Apparment', area: '73 m²' },
  { x: 427, y: 216, name: 'Terrace', area: '16 m²' },
  { x: 309, y: 410, name: 'Appartment', area: '89 m²' },
  { x: 474, y: 410, name: 'Terrace', area: '40 m²' },
  { x: 306, y: 680, name: 'Appartment', area: '105 m²' },
  { x: 533, y: 699, name: 'Terrace', area: '64 m²' },
];

function AreaPlan() {
  return (
    <svg width="780" height="800" viewBox="0 0 780 800" fill="none">
      <g stroke="#7f00ff" shapeRendering="crispEdges">
        {plans.map((p) => (
          <g key={p.y}>
            <rect x={p.x + 0.5} y={p.y + 0.5} width={p.w} height={p.h} />
            <path d={`M410.5 ${p.y}v${p.h}`} />
          </g>
        ))}
      </g>
      <g fontFamily="Liberation Sans, Arial, sans-serif" fontSize="9" textAnchor="middle" fill="#000">
        {tags.map((t) => (
          <g key={`${t.x}-${t.y}`}>
            <text x={t.x} y={t.y} textDecoration="underline">{t.name}</text>
            <text x={t.x} y={t.y + 9}>{t.area}</text>
          </g>
        ))}
      </g>
      {/* move grip on the last tag */}
      <path d="M533 691l3 4h-2v2h-2v-2h-2zM533 712l3-4h-2v-2h-2v2h-2zM523 701l4-3v2h2v2h-2v2zM544 701l-4-3v2h-2v2h2v2z" fill="#0b3cb0" />
    </svg>
  );
}

function NavigationBar() {
  return (
    <aside className="absolute -right-[7px] top-0 flex h-[118px] w-[36px] flex-col items-center rounded-lg border-2 border-[#b3b3b3] bg-white">
      <svg width="32" height="114" viewBox="0 0 32 114" fill="none">
        <circle cx="26" cy="5" r="3.5" stroke="#999" strokeWidth="1.5" />
        <path d="M14 22h9v9a9 9 0 1 1-9-9z" fill="#eee" stroke="#9a9a9a" strokeWidth="1.5" />
        <circle cx="14" cy="30" r="5" fill="#fff" stroke="#9a9a9a" strokeWidth="1.5" />
        <text x="15" y="43" fontSize="9" fontWeight="700" fill="#5b8fc7" fontFamily="Open Sans, sans-serif">2D</text>
        <path d="M13 49h6l-3 3z" fill="#777" />
        <path d="M3 56.5h29" stroke="#b3b3b3" />
        <rect x="8.5" y="65.5" width="11" height="11" fill="#a9d2a0" stroke="#78b06c" />
        <circle cx="18.5" cy="75.5" r="3.5" fill="#f5f5f5" stroke="#8d8d8d" strokeWidth="1.5" />
        <path d="M21 78l3 3" stroke="#8d8d8d" strokeWidth="2" />
        <path d="M13 91h6l-3 3z" fill="#777" />
        <circle cx="26" cy="108" r="3.5" stroke="#999" strokeWidth="1.5" />
        <path d="M24 108h4" stroke="#999" />
      </svg>
    </aside>
  );
}

// only the top edge of this bar is on screen
function ViewControls() {
  return (
    <div className="flex h-[7px] shrink-0 items-start overflow-hidden">
      <span className="w-[92px] shrink-0 pl-6 pt-0.5 text-[13px] leading-4 text-black">1 : 100</span>
      <svg width="300" height="20" viewBox="0 0 300 20" fill="none" className="shrink-0">
        <rect x="1" y="1" width="18" height="16" fill="#eceaf2" stroke="#555" />
        <path d="M1 2h18" stroke="#555" strokeWidth="2" />
        <path d="M26 8l5-6h13l-5 8H26z" fill="#fff" stroke="#444" strokeWidth="1.5" />
        <path d="M57 0l2 4 6 0-3 4 3 6H50l3-6-4-4 6 0z" fill="#f6c545" stroke="#c98a12" />
        <circle cx="83" cy="8" r="5" stroke="#4a90d0" strokeWidth="2.5" />
        <path d="M103 5h14v8h-14zM108 2h6" fill="#2f78b8" stroke="#24598c" strokeWidth="2" />
        <path d="M128 5h10v8h-10zM135 2h7v8" fill="#5f9fd4" stroke="#24598c" strokeWidth="2" />
        <path d="M150 5l4 8M157 3c4-2 10 1 10 8" stroke="#666" strokeWidth="2.5" />
        <circle cx="184" cy="8" r="3.5" stroke="#4a90d0" strokeWidth="2" />
        <path d="M202 10V4l2-2h3v2l2-2h3v2l2-2 4 4v4z" fill="#333" />
        <path d="M224 9l7-7h10v8M230 3v9M236 3v9" stroke="#555" strokeWidth="1.5" />
        <circle cx="239" cy="6" r="3" fill="#8fc1ea" />
        <path d="M249 0v14M268 0v14M249 4h19" stroke="#333" strokeWidth="2" />
        <path d="M285 3l-4 4 4 4" stroke="#333" strokeWidth="1.5" />
      </svg>
      <div className="ml-[202px] h-full w-[21px] bg-[#cbcbcb]" />
    </div>
  );
}

function PlanView() {
  return (
    <section className="flex min-w-0 flex-1 flex-col bg-[#cbcbcb]">
      <div className="flex h-[25px] shrink-0 text-[#444]">
        <button className="flex h-full w-40 items-center gap-[9px] bg-[#ebebeb] pl-1.5"><ViewTabIcon hatched />Level 1</button>
        <button className="flex h-full w-40 items-center gap-[9px] pl-1.5"><ViewTabIcon />EG OK FFB</button>
      </div>
      <div className="relative flex min-h-0 flex-1 flex-col overflow-hidden border-l-2 border-t-2 border-[#ebebeb] bg-white">
        <div className="min-h-0 flex-1 overflow-hidden"><AreaPlan /></div>
        <ViewControls />
        <NavigationBar />
      </div>
    </section>
  );
}

export default function App() {
  return (
    <div className="relative flex h-screen flex-col overflow-hidden border-b border-r border-[#8f8f8f] bg-[#ebebeb] font-['Open_Sans','Noto_Sans',sans-serif] text-[14px] leading-5">
      <MenuBar />
      <Ribbon />
      <OptionsBar />
      <div className="flex min-h-0 flex-1">
        <aside className="flex w-[513px] shrink-0 flex-col border-l border-r-2 border-l-[#ebebeb] border-r-[#cbcbcb]">
          <PropertiesPalette />
          <ProjectBrowser />
        </aside>
        <ScheduleView />
        <PlanView />
      </div>
      <div className="absolute bottom-0 right-0 h-4 w-10 bg-black text-center font-['Liberation_Mono',monospace] text-[14px] font-bold leading-4 text-white">0:00</div>
    </div>
  );
}
